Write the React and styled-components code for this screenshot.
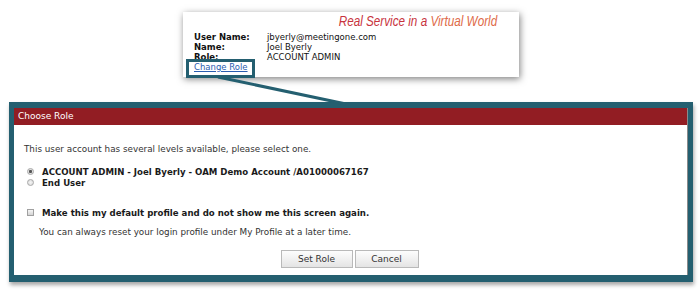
import React from 'react'
import styled, { createGlobalStyle } from 'styled-components'

const teal = '#245f70'

const GlobalStyle = createGlobalStyle`
  body {
    margin: 0;
    background: #fff;
    font-family: "DejaVu Sans", Verdana, sans-serif;
  }
`

const Page = styled.div`
  position: relative;
  width: 700px;
  height: 294px;
  overflow: hidden;
  box-sizing: border-box;
  padding: 12px 0 0 2px;
  display: flex;
  flex-direction: column;
  align-items: center;
`

const ProfileCard = styled.div`
  width: 336px;
  height: 65px;
  box-sizing: border-box;
  padding: 2px 22px 0 11px;
  background: #fff;
  box-shadow: 1px 2px 7px rgba(0, 0, 0, 0.5);
  display: flex;
  flex-direction: column;
`

const Slogan = styled.div`
  align-self: flex-end;
  font-family: "Liberation Sans", sans-serif;
  font-style: italic;
  font-size: 15px;
  line-height: 14px;
  color: #c8333d;
  transform: scaleX(0.78);
  transform-origin: right center;
  white-space: nowrap;

  span {
    color: #de6a48;
  }
`

const InfoGrid = styled.dl`
  margin: 4px 0 0;
  display: grid;
  grid-template-columns: 73px auto;
  font-size: 8.5px;
  line-height: 10px;
  color: #111;

  dt {
    font-weight: bold;
  }
  dd {
    margin: 0;
  }
`

const LinkBox = styled.div`
  width: fit-content;
  margin: -3px 0 0 -8px;
  padding: 0 4px 3px 5px;
  border: 3px solid ${teal};
  font-size: 8.5px;
  line-height: 10px;
  background: #fff;

  a {
    color: #2a5db0;
  }
`

const Callout = styled.svg`
  position: absolute;
  top: 0;
  left: 0;
  pointer-events: none;
`

const RolePanel = styled.section`
  margin-top: 25px;
  width: 684px;
  height: 180px;
  box-sizing: border-box;
  border: 5px solid ${teal};
  border-top-width: 6px;
  border-bottom-width: 7px;
  background: #fff;
  box-shadow: 1px 3px 4px rgba(0, 0, 0, 0.35);
  display: flex;
  flex-direction: column;
`

const Dialog = styled.div`
  flex: 1;
  border-right: 1px solid #8a8a8a;
  display: flex;
  flex-direction: column;
`

const Header = styled.div`
  height: 17px;
  padding-left: 4px;
  background: #921d23;
  color: #fff;
  font-size: 9px;
  line-height: 17px;
`

const Body = styled.div`
  padding-left: 10px;
  color: #333;
  font-size: 8.8px;
  line-height: 10px;
  display: flex;
  flex-direction: column;
`

const Intro = styled.p`
  margin: 19px 0 0;
`

const OptionList = styled.div`
  margin-top: 12px;
  display: flex;
  flex-direction: column;
`

const Option = styled.label`
  display: flex;
  align-items: center;
  gap: 8px;
  height: 11px;
  padding-left: 3px;
  margin-top: ${p => p.$spaced ? '19px' : '0'};
  font-size: 8.6px;
  font-weight: bold;
  color: #1a1a1a;
`

const Radio = styled.input.attrs({ type: 'radio' })`
  appearance: none;
  margin: 0;
  width: 7px;
  height: 7px;
  border-radius: 50%;
  border: 1px solid #a8a8a8;
  background: radial-gradient(circle, #f4f4f4, #d8d8d8);
  box-sizing: border-box;

  &:checked {
    background: radial-gradient(circle, #555 0 1.3px, #e0e0e0 1.8px);
  }
`

const Checkbox = styled.input.attrs({ type: 'checkbox' })`
  appearance: none;
  margin: 0;
  width: 7px;
  height: 7px;
  border: 1px solid #a0a0a0;
  background: linear-gradient(#f6f6f6, #d4d4d4);
  box-sizing: border-box;
`

const Note = styled.p`
  margin: 9px 0 0 15px;
`

const Actions = styled.div`
  margin-top: 13px;
  display: flex;
  justify-content: center;
  gap: 2px;
  padding-right: 12px;
`

const Button = styled.button`
  width: ${p => p.$w}px;
  height: 18px;
  padding: 0;
  border: 1px solid #b9b9b9;
  background: linear-gradient(#fdfdfd, #e4e4e4);
  font-family: "DejaVu Sans", Verdana, sans-serif;
  font-size: 9px;
  color: #333;
`

export default function App() {
  return (
    <>
      <GlobalStyle />
      <Page>
        <ProfileCard>
          <Slogan>
            Real Service in a <span>Virtual World</span>
          </Slogan>
          <InfoGrid>
            <dt>User Name:</dt>
            <dd>jbyerly@meetingone.com</dd>
            <dt>Name:</dt>
            <dd>Joel Byerly</dd>
            <dt>Role:</dt>
            <dd>ACCOUNT ADMIN</dd>
          </InfoGrid>
          <LinkBox>
            <a href="#">Change Role</a>
          </LinkBox>
        </ProfileCard>

        <RolePanel>
          <Dialog>
            <Header>Choose Role</Header>
            <Body>
              <Intro>This user account has several levels available, please select one.</Intro>
              <OptionList>
                <Option>
                  <Radio name="role" defaultChecked />
                  ACCOUNT ADMIN - Joel Byerly - OAM Demo Account /A01000067167
                </Option>
                <Option>
                  <Radio name="role" />
                  End User
                </Option>
              </OptionList>
              <Option $spaced>
                <Checkbox />
                Make this my default profile and do not show me this screen again.
              </Option>
              <Note>You can always reset your login profile under My Profile at a later time.</Note>
              <Actions>
                <Button $w={72}>Set Role</Button>
                <Button $w={64}>Cancel</Button>
              </Actions>
            </Body>
          </Dialog>
        </RolePanel>

        <Callout width="700" height="294">
          <line x1="218" y1="77" x2="346" y2="104" stroke={teal} strokeWidth="3" />
        </Callout>
      </Page>
    </>
  )
}
